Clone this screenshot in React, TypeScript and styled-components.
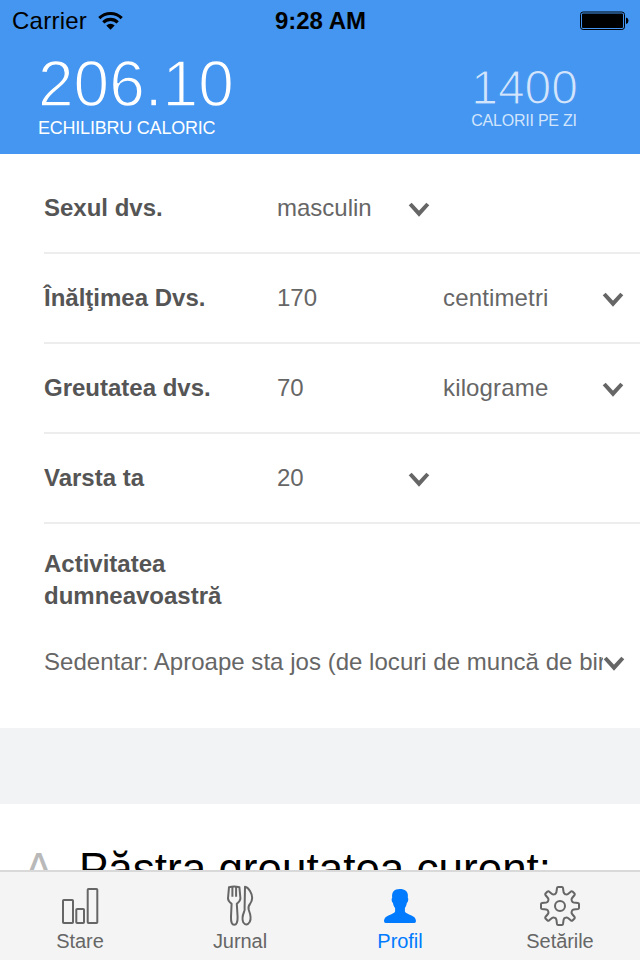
import React from 'react';
import styled, { createGlobalStyle } from 'styled-components';

const BLUE = '#4496f1';

const GlobalStyle = createGlobalStyle`
  *, *::before, *::after { box-sizing: border-box; }
  body {
    margin: 0;
    background: #fff;
    font-family: "Liberation Sans", Arial, Helvetica, sans-serif;
    overflow: hidden;
  }
`;

const Screen = styled.div`
  width: 640px;
  height: 960px;
  display: flex;
  flex-direction: column;
  overflow: hidden;
  background: #fff;
`;

const Header = styled.header`
  height: 154px;
  flex: none;
  background: ${BLUE};
`;

const StatusBar = styled.div`
  height: 40px;
  display: grid;
  grid-template-columns: 1fr auto 1fr;
  align-items: center;
  padding: 1px 11px 0 12px;
  font-size: 24px;
  line-height: 40px;
  color: #000;
`;

const Carrier = styled.div`
  display: flex;
  align-items: center;
  gap: 11px;
  letter-spacing: 0.25px;
`;

const Clock = styled.div`
  font-weight: 700;
`;

const BatterySlot = styled.div`
  display: flex;
  justify-content: flex-end;
`;

const Totals = styled.div`
  display: flex;
  justify-content: space-between;
  padding: 11px 62px 0 38px;
`;

const Total = styled.div<{ $secondary?: boolean }>`
  padding-top: ${(p) => (p.$secondary ? 11 : 0)}px;
  color: ${(p) => (p.$secondary ? '#d2e5fc' : '#fff')};
`;

const Figure = styled.div<{ $size: number; $thin: number }>`
  height: ${(p) => (p.$size === 64 ? 67 : 49)}px;
  line-height: ${(p) => (p.$size === 64 ? 67 : 52)}px;
  font-size: ${(p) => p.$size}px;
  -webkit-text-stroke: ${(p) => p.$thin}px ${BLUE};
`;

const Caption = styled.div<{ $size: number }>`
  font-size: ${(p) => p.$size}px;
  line-height: 20px;
  letter-spacing: -0.22px;
  white-space: nowrap;
`;

const Form = styled.main`
  height: 574px;
  flex: none;
  padding: 10px 0 0 44px;
  color: #666;
  font-size: 24px;
`;

const Row = styled.div`
  height: 90px;
  border-bottom: 2px solid #ededed;
  display: grid;
  grid-template-columns: 233px 131px 35px 159px 1fr;
  align-items: center;
`;

const Label = styled.div`
  color: #555;
  font-weight: 700;
  line-height: 32px;
`;

const Unit = styled.span`
  letter-spacing: 0.15px;
`;

const Activity = styled.section`
  padding-top: 24px;
`;

const ActivitySelect = styled.div`
  display: flex;
  align-items: center;
  margin-top: 34px;
  height: 32px;
`;

const ActivityValue = styled.div`
  width: 559px;
  flex: none;
  overflow: hidden;
  white-space: nowrap;
  line-height: 32px;
  letter-spacing: 0.03px;
`;

const Separator = styled.div`
  height: 76px;
  flex: none;
  background: #f2f3f5;
`;

const Goal = styled.section`
  height: 66px;
  flex: none;
  overflow: hidden;
  display: flex;
  padding: 40px 0 0 24px;
  font-size: 44px;
  line-height: 50px;
  white-space: nowrap;
  color: #000;
`;

const GoalMark = styled.div`
  width: 55px;
  flex: none;
  color: #b9b9b9;
`;

const TabBar = styled.nav`
  height: 90px;
  flex: none;
  border-top: 2px solid #d9d9d9;
  background: #f4f4f4;
  display: grid;
  grid-template-columns: repeat(4, 1fr);
`;

const Tab = styled.div<{ $active?: boolean }>`
  display: flex;
  flex-direction: column;
  align-items: center;
  padding-top: 12px;
  color: ${(p) => (p.$active ? '#007aff' : '#666')};
  font-size: 20px;
  line-height: 24px;
  letter-spacing: -0.05px;
  svg { display: block; margin-bottom: 1px; }
`;

const Chevron = () => (
  <svg width="22" height="18" viewBox="0 0 22 18" fill="none">
    <path d="M2.2 5 L11 14.7 L19.8 5" stroke="#666" strokeWidth="4" />
  </svg>
);

const Wifi = () => (
  <svg width="25" height="20" viewBox="0 0 25 20">
    <g fill="none" stroke="#000" strokeWidth="3.1">
      <path d="M1.3 7.1 A15.8 15.8 0 0 1 23.7 7.1" />
      <path d="M5.3 11.4 A10.2 10.2 0 0 1 19.7 11.4" />
    </g>
    <path d="M8.3 14.5 A6 6 0 0 1 16.7 14.5 L12.5 18.8 Z" />
  </svg>
);

const Battery = () => (
  <svg width="50" height="20" viewBox="0 0 50 20">
    <rect x="1.5" y="1" width="44" height="17.5" rx="2.6" fill="none" stroke="#000" />
    <rect x="3" y="2.5" width="41" height="14.5" rx="1" />
    <path d="M47 6.5 Q49.5 7 49.5 9.8 Q49.5 12.5 47 13 Z" />
  </svg>
);

const BarsIcon = () => (
  <svg width="40" height="44" viewBox="0 0 40 44" fill="none" stroke="currentColor" strokeWidth="2">
    <rect x="3" y="16" width="10" height="23" rx=".8" />
    <rect x="16.3" y="25" width="7.7" height="14" rx=".8" />
    <rect x="27.7" y="5" width="9.6" height="34" rx=".8" />
  </svg>
);

const CutleryIcon = () => (
  <svg width="40" height="44" viewBox="0 0 40 44" fill="none" stroke="currentColor" strokeWidth="2" strokeLinejoin="round">
    <path d="M9 3.2 Q14 2 19.4 3.2 L20.4 14.5 Q20.3 17 16.8 19.7 L17.6 33 Q17.7 40.8 14.2 40.8 Q10.8 40.8 11 33 L11.6 19.7 Q8 17 8 14.5 Z" />
    <path d="M12.4 3 V12.8 M16.1 3 V12.8" />
    <path d="M25 2.8 Q27.5 3 30 7 Q34.3 14 30 20 Q27.8 22.4 28.8 26 Q31.8 34 29.8 37.8 Q26.5 43 23.2 38.2 Q21.5 34 24 28 Q25 26 24.6 23.5 Z" />
  </svg>
);

const PersonIcon = () => (
  <svg width="40" height="44" viewBox="0 0 40 44" fill="currentColor">
    <path d="M19.8 5 C24.8 5 28.1 7.5 27.9 11.8 L27.8 14 C28.8 14.4 28.1 18.3 26.9 18.8 C26.4 21.5 25.8 22.7 24.9 24 V27.4 C26.5 31 35.9 30.5 36 37 Q36 39 34.3 39 H5.7 Q4 39 4 37 C4.1 30.5 13.5 31 15.1 27.4 V24 C14 22.7 13.2 21 12.9 18.8 C11.6 18.2 11.2 14.4 12.2 14 C11.5 8 14 5 19.8 5 Z" />
  </svg>
);

const GearIcon = () => (
  <svg width="40" height="44" viewBox="0 0 40 44" fill="none" stroke="currentColor" strokeWidth="2" strokeLinejoin="round">
    <path d="M18 3 H22 Q22.8 3 23 4 L23.6 8.3 Q23.9 9.7 25.2 10.2 Q26.8 10.9 28 9.9 L31 7.4 Q31.8 6.9 32.5 7.5 L34.5 9.5 Q35.1 10.2 34.6 11 L32.1 14 Q31.1 15.2 31.8 16.8 Q32.3 18.1 33.7 18.4 L38 19 Q39 19.2 39 20 V24 Q39 24.8 38 25 L33.7 25.6 Q32.3 25.9 31.8 27.2 Q31.1 28.8 32.1 30 L34.6 33 Q35.1 33.8 34.5 34.5 L32.5 36.5 Q31.8 37.1 31 36.6 L28 34.1 Q26.8 33.1 25.2 33.8 Q23.9 34.3 23.6 35.7 L23 40 Q22.8 41 22 41 H18 Q17.2 41 17 40 L16.4 35.7 Q16.1 34.3 14.8 33.8 Q13.2 33.1 12 34.1 L9 36.6 Q8.2 37.1 7.5 36.5 L5.5 34.5 Q4.9 33.8 5.4 33 L7.9 30 Q8.9 28.8 8.2 27.2 Q7.7 25.9 6.3 25.6 L2 25 Q1 24.8 1 24 V20 Q1 19.2 2 19 L6.3 18.4 Q7.7 18.1 8.2 16.8 Q8.9 15.2 7.9 14 L5.4 11 Q4.9 10.2 5.5 9.5 L7.5 7.5 Q8.2 6.9 9 7.4 L12 9.9 Q13.2 10.9 14.8 10.2 Q16.1 9.7 16.4 8.3 L17 4 Q17.2 3 18 3 Z" />
    <circle cx="20" cy="22" r="5" />
  </svg>
);

type Field = { label: string; value: string; unit?: string };

const fields: Field[] = [
  { label: 'Sexul dvs.', value: 'masculin' },
  { label: 'Înălţimea Dvs.', value: '170', unit: 'centimetri' },
  { label: 'Greutatea dvs.', value: '70', unit: 'kilograme' },
  { label: 'Varsta ta', value: '20' },
];

const tabs = [
  { name: 'Stare', Icon: BarsIcon },
  { name: 'Jurnal', Icon: CutleryIcon },
  { name: 'Profil', Icon: PersonIcon, active: true },
  { name: 'Setările', Icon: GearIcon },
];

export default function App() {
  return (
    <Screen>
      <GlobalStyle />
      <Header>
        <StatusBar>
          <Carrier>Carrier <Wifi /></Carrier>
          <Clock>9:28 AM</Clock>
          <BatterySlot><Battery /></BatterySlot>
        </StatusBar>
        <Totals>
          <Total>
            <Figure $size={64} $thin={1.5}>206.10</Figure>
            <Caption $size={18}>ECHILIBRU CALORIC</Caption>
          </Total>
          <Total $secondary>
            <Figure $size={48} $thin={1.2}>1400</Figure>
            <Caption $size={16}>CALORII PE ZI</Caption>
          </Total>
        </Totals>
      </Header>
      <Form>
        {fields.map((f) => (
          <Row key={f.label}>
            <Label>{f.label}</Label>
            <span>{f.value}</span>
            {f.unit ? (
              <>
                <span />
                <Unit>{f.unit}</Unit>
              </>
            ) : null}
            <Chevron />
          </Row>
        ))}
        <Activity>
          <Label>Activitatea<br />dumneavoastră</Label>
          <ActivitySelect>
            <ActivityValue>Sedentar: Aproape sta jos (de locuri de muncă de birou)</ActivityValue>
            <Chevron />
          </ActivitySelect>
        </Activity>
      </Form>
      <Separator />
      <Goal>
        <GoalMark>A</GoalMark>
        <div>Păstra greutatea curent:</div>
      </Goal>
      <TabBar>
        {tabs.map(({ name, Icon, active }) => (
          <Tab key={name} $active={active}>
            <Icon />
            {name}
          </Tab>
        ))}
      </TabBar>
    </Screen>
  );
}
